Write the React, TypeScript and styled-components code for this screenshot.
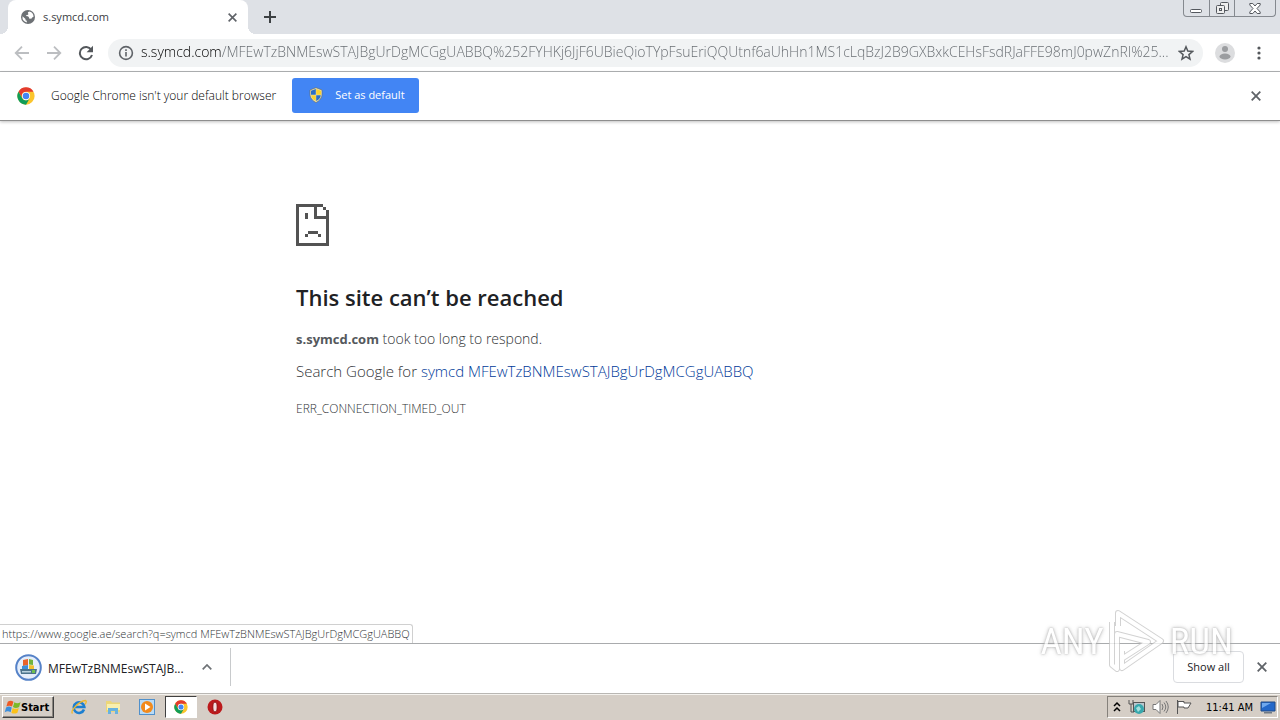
import React from "react";
import styled, { createGlobalStyle, css } from "styled-components";

const ui = `"DejaVu Sans Condensed", "DejaVu Sans", sans-serif`;
const page = `"Open Sans", "Noto Sans", sans-serif`;

const Global = createGlobalStyle`
  * { box-sizing: border-box; }
  body { margin: 0; background: #fff; }
  button { font: inherit; color: inherit; border: 0; padding: 0; background: none; }
  svg { display: block; flex: none; }
`;

const Desktop = styled.div`
  min-height: 100vh;
  display: flex;
  flex-direction: column;
  font-family: ${page};
  color: #3c4043;
`;

const TabStrip = styled.header`
  height: 34px;
  display: flex;
  align-items: stretch;
  padding-left: 8px;
  background: #dee1e6;
`;

const Tab = styled.div`
  position: relative;
  width: 240px;
  display: flex;
  align-items: center;
  gap: 8px;
  padding: 0 10px 0 13px;
  border-radius: 8px 8px 0 0;
  background: #fff;
  font-size: 11px;
  line-height: 16px;
  &::before, &::after {
    content: "";
    position: absolute;
    bottom: 0;
    width: 8px;
    height: 8px;
  }
  &::before { right: 100%; background: radial-gradient(circle at 0 0, #dee1e6 8px, #fff 8px); }
  &::after { left: 100%; background: radial-gradient(circle at 100% 0, #dee1e6 8px, #fff 8px); }
`;

const TabTitle = styled.span`
  flex: 1;
`;

const IconButton = styled.button<{ $size?: number }>`
  flex: none;
  width: ${(p) => p.$size ?? 16}px;
  height: ${(p) => p.$size ?? 16}px;
  display: grid;
  place-items: center;
`;

const NewTab = styled(IconButton)`
  align-self: center;
  margin-left: 14px;
`;

const WindowControls = styled.div`
  align-self: flex-start;
  display: flex;
  height: 17px;
  margin: 0 4px 0 auto;
  border: 1px solid #85898f;
  border-top: 0;
  border-radius: 0 0 4px 4px;
`;

const WindowButton = styled.button<{ $wide?: boolean }>`
  width: ${(p) => (p.$wide ? 41 : 25)}px;
  display: grid;
  place-items: center;
  & + & { border-left: 1px solid #85898f; }
`;

const Toolbar = styled.nav`
  height: 38px;
  display: flex;
  align-items: center;
  padding: 0 13px 0 14px;
  gap: 16px;
  background: #fff;
  border-bottom: 1px solid #b2b4b6;
`;

const AddressBar = styled.label`
  flex: 1;
  min-width: 0;
  height: 28px;
  display: flex;
  align-items: center;
  gap: 7px;
  margin: 0 -4px 0 -2px;
  padding: 0 9px 0 10px;
  border-radius: 14px;
  background: #f1f3f4;
`;

const AddressInput = styled.input`
  flex: 1;
  min-width: 0;
  height: 26px;
  padding: 0 0 2px;
  border: 0;
  outline: 0;
  font-family: ${page};
  font-size: 14px;
  font-weight: 300;
  text-overflow: ellipsis;
  color: #80868b;
  -webkit-text-fill-color: transparent;
  background: linear-gradient(to right, #000 81px, #64696e 81px);
  -webkit-background-clip: text;
  background-clip: text;
`;

const InfoBar = styled.section`
  height: 49px;
  display: flex;
  align-items: center;
  padding: 0 16px 0 17px;
  border-bottom: 1px solid #8e8e8e;
  box-shadow: 0 1px 3px #00000040;
  font-size: 12px;
  line-height: 18px;
`;

const InfoText = styled.span`
  margin: 0 16px;
  font-weight: 300;
  color: #000;
`;

const DefaultButton = styled.button`
  height: 35px;
  width: 127px;
  display: flex;
  align-items: center;
  gap: 11px;
  margin-bottom: 2px;
  padding-left: 16px;
  border-radius: 3px;
  background: #4285f4;
  color: #fff;
  font-size: 11px;
`;

const Spacer = styled.div`
  flex: 1;
`;

const Content = styled.main`
  position: relative;
  flex: 1;
  padding: 83px 24px 40px;
`;

const ErrorBox = styled.article`
  max-width: 688px;
  margin: 0 auto;
  font-weight: 300;
  color: #303336;
`;

const Heading = styled.h1`
  margin: 37px 0 17px;
  font-size: 22px;
  line-height: 28px;
  font-weight: 600;
  color: #202124;
`;

const Line = styled.p<{ $size: number }>`
  margin: 0 0 10px;
  font-size: ${(p) => p.$size}px;
  line-height: 22px;
`;

const Host = styled.strong`
  font-size: 13px;
  font-weight: 700;
  color: #54585c;
`;

const ErrorCode = styled.div`
  margin-top: 16px;
  font-size: 12px;
  line-height: 22px;
`;

const SearchLink = styled.a`
  color: #003a99;
  text-decoration: none;
`;

const StatusBubble = styled.div`
  position: absolute;
  left: 0;
  bottom: 0;
  height: 19px;
  padding: 0 2px;
  border: 1px solid #d0d0d0;
  border-width: 1px 1px 0 0;
  border-radius: 0 3px 0 0;
  background: #fff;
  font-size: 11px;
  font-weight: 300;
  line-height: 18px;
  color: #303336;
`;

const Shelf = styled.section`
  position: relative;
  height: 50px;
  display: flex;
  align-items: center;
  padding: 0 10px 3px 15px;
  border-top: 1px solid #a9abad;
  background: #fff;
`;

const Download = styled.div`
  height: 38px;
  width: 216px;
  display: flex;
  align-items: center;
  gap: 6px;
  padding-right: 15px;
  border-right: 1px solid #c8cacc;
  font-size: 12px;
  color: #202124;
`;

const FileName = styled.span`
  flex: 1;
  padding-top: 2px;
  white-space: nowrap;
`;

const ShowAll = styled.button`
  width: 71px;
  height: 32px;
  margin-right: 10px;
  border: 1px solid #dadce0;
  border-radius: 4px;
  font-size: 11px;
  line-height: 12px;
  color: #202124;
`;

const Watermark = styled.div`
  position: absolute;
  right: 47px;
  bottom: 18px;
  display: flex;
  align-items: center;
  gap: 3px;
  pointer-events: none;
  opacity: 0.75;
  font-family: "Roboto Condensed", Roboto, sans-serif;
  font-size: 37px;
  line-height: 32px;
  color: #fff;
  text-shadow: 0 0 2px #999, 0 0 4px #aaa;
`;

const Taskbar = styled.footer`
  height: 27px;
  display: flex;
  align-items: center;
  padding: 2px;
  background: #d5cec6;
  border-top: 1px solid #b9b7b3;
  box-shadow: inset 0 1px #f4f2ee;
  font-family: ${ui};
  font-size: 11px;
  color: #000;
`;

const raised = css`
  border: 1px solid;
  border-color: #fff #404040 #404040 #fff;
  box-shadow: inset -1px -1px #8b8780;
`;

const StartButton = styled.button`
  ${raised}
  width: 52px;
  height: 22px;
  display: flex;
  align-items: center;
  padding-left: 1px;
  font-size: 11px;
  font-weight: 700;
`;

const QuickLaunch = styled.div`
  display: flex;
  align-items: center;
  gap: 2px;
  margin-left: 9px;
`;

const AppButton = styled.button<{ $active?: boolean }>`
  width: 32px;
  height: 22px;
  display: grid;
  place-items: center;
  ${(p) =>
    p.$active &&
    css`
      background: #fff;
      border: 1px solid;
      border-color: #404040 #fff #fff #404040;
    `}
`;

const Tray = styled.div`
  height: 22px;
  display: flex;
  align-items: center;
  gap: 7px;
  margin-left: auto;
  padding: 0 1px 0 5px;
  border: 1px solid;
  border-color: #85817b #fff #fff #85817b;
`;

const Clock = styled.time`
  margin-left: 7px;
`;

const Cross = ({ color = "#5f6368", size = 10 }: { color?: string; size?: number }) => (
  <svg width={size} height={size} viewBox="0 0 10 10" stroke={color} strokeWidth="1.8">
    <path d="M.7.7l8.6 8.6M9.3.7L.7 9.3" />
  </svg>
);

const Arrow = ({ flip }: { flip?: boolean }) => (
  <svg width="16" height="16" viewBox="0 0 16 16" fill="none" stroke="#bcbec1" strokeWidth="1.8">
    <path d={flip ? "M1 8h13M8 1.7L14.3 8 8 14.3" : "M15 8H2M8 1.7L1.7 8 8 14.3"} />
  </svg>
);

const ChromeLogo = ({ size }: { size: number }) => (
  <svg width={size} height={size} viewBox="0 0 48 48">
    <circle cx="24" cy="24" r="23" fill="#fbc52d" />
    <path d="M4 12.5A23 23 0 0 1 44 12.5H24A11.5 11.5 0 0 0 14 29.7z" fill="#e33b2e" />
    <path d="M4 12.5A23 23 0 0 0 24 47L34 29.7A11.5 11.5 0 0 1 14 29.7z" fill="#109d58" />
    <circle cx="24" cy="24" r="11" fill="#fff" />
    <circle cx="24" cy="24" r="8.7" fill="#4285f4" />
  </svg>
);

const WinFlag = ({ size }: { size: number }) => (
  <svg width={size} height={size} viewBox="0 1 18 16">
    <path d="M4 3c2-1.500 4-1.500 6 0L8.500 8c-2-1.300-4-1.300-6 0z" fill="#ee5a24" />
    <path d="M11 3.500c2 1.200 4 1.200 6.500 0L16 8.500c-2.300 1.200-4.500 1.200-6.500 0z" fill="#7cb928" />
    <path d="M2.200 9c2-1.300 4-1.300 6 0L7 14c-2-1.300-4-1.300-6.200 0z" fill="#3b8edb" />
    <path d="M9.200 9.500c2 1.200 4 1.200 6.500 0l-1.500 5c-2.200 1.200-4.400 1.200-6.400 0z" fill="#fbc119" />
  </svg>
);

const url =
  "s.symcd.com/MFEwTzBNMEswSTAJBgUrDgMCGgUABBQ%252FYHKj6JjF6UBieQioTYpFsuEriQQUtnf6aUhHn1MS1cLqBzJ2B9GXBxkCEHsFsdRJaFFE98mJ0pwZnRI%25...";

export default function App() {
  return (
    <Desktop>
      <Global />
      <TabStrip>
        <Tab>
          <svg width="14" height="14" viewBox="0 0 14 14">
            <circle cx="7" cy="7" r="7" fill="#6d7175" />
            <path d="M8.500 1.500c-2 .4-2 1.700-1 2.400-.4 1.600-2.200.6-2.700 2.100 1.600.2 3.400.2 3.200 2.400l2.200.3c.9-.5 1-1.700 2.300-1.600a5.600 5.600 0 0 0-4-5.600zM1.500 6.300l3 2.800v1.200l1.300.5v1.700a5.700 5.700 0 0 1-4.300-6.200z" fill="#fff" />
          </svg>
          <TabTitle>s.symcd.com</TabTitle>
          <IconButton aria-label="Close tab" $size={12}><Cross size={9} /></IconButton>
        </Tab>
        <NewTab aria-label="New tab">
          <svg width="12" height="12" viewBox="0 0 12 12" stroke="#3c4043" strokeWidth="2"><path d="M6 0v12M0 6h12" /></svg>
        </NewTab>
        <WindowControls>
          <WindowButton aria-label="Minimize">
            <svg width="13" height="15" viewBox="0 0 13 15" fill="#fff" stroke="#54585e"><rect x=".5" y="8.500" width="11" height="3" rx="1" /></svg>
          </WindowButton>
          <WindowButton aria-label="Restore">
            <svg width="13" height="13" viewBox="0 0 13 13" fill="#eee" stroke="#54585e">
              <rect x="4.500" y=".5" width="8" height="8" rx="1" /><rect x=".5" y="3.500" width="8" height="8" rx="1" /><rect x="3.500" y="6.500" width="2" height="2" />
            </svg>
          </WindowButton>
          <WindowButton aria-label="Close" $wide>
            <svg width="12" height="11" viewBox="0 0 12 11" fill="#fff" stroke="#54585e"><path d="M.8.5h3L6 3 8.200.5h3v1.500L8 5.500 11.200 9v1.500h-3L6 8l-2.200 2.500h-3V9L4 5.500.8 2z" /></svg>
          </WindowButton>
        </WindowControls>
      </TabStrip>

      <Toolbar>
        <IconButton aria-label="Back"><Arrow /></IconButton>
        <IconButton aria-label="Forward"><Arrow flip /></IconButton>
        <IconButton aria-label="Reload">
          <svg width="16" height="16" viewBox="0 0 16 16"><path d="M13.200 4.600A6.200 6.200 0 1 0 14 10" fill="none" stroke="#54585c" strokeWidth="2" /><path d="M15 .8v6.400H8.600z" fill="#54585c" /></svg>
        </IconButton>
        <AddressBar>
          <svg width="16" height="16" viewBox="0 0 16 16" fill="none" stroke="#5f6368" strokeWidth="1.600"><circle cx="8" cy="8" r="6.400" /><path d="M8 7v4.500M8 4.200v1.700" /></svg>
          <AddressInput aria-label="Address" readOnly value={url} />
          <svg width="16" height="16" viewBox="0 0 16 16" fill="none" stroke="#54585c" strokeWidth="1.500"><path d="M8 1.800l1.800 4.300 4.700.4-3.600 3.100 1.100 4.600L8 11.700l-4 2.500 1.100-4.600L1.500 6.500l4.700-.4z" /></svg>
        </AddressBar>
        <IconButton aria-label="Profile" $size={20}>
          <svg width="20" height="20" viewBox="0 0 20 20"><circle cx="10" cy="10" r="10" fill="#dcdddf" /><circle cx="10" cy="6" r="3" fill="#9b9da0" /><ellipse cx="10" cy="13.500" rx="5.500" ry="3" fill="#9b9da0" /></svg>
        </IconButton>
        <IconButton aria-label="Menu">
          <svg width="4" height="14" viewBox="0 0 4 14" fill="#54585c"><circle cx="2" cy="2" r="1.600" /><circle cx="2" cy="7" r="1.600" /><circle cx="2" cy="12" r="1.600" /></svg>
        </IconButton>
      </Toolbar>

      <InfoBar>
        <ChromeLogo size={18} />
        <InfoText>Google Chrome isn't your default browser</InfoText>
        <DefaultButton>
          <svg width="16" height="16" viewBox="0 0 16 16">
            <path d="M8 .7L14 3v4c0 4-2.500 6.700-6 8.500C4.500 13.700 2 11 2 7V3z" fill="#e8e2bb" stroke="#6d6a50" strokeWidth=".6" />
            <path d="M7.800 2v5.800H3V3.800z" fill="#2c6fc4" /><path d="M8.200 2v5.800H13V3.800z" fill="#fbd22d" />
            <path d="M3.200 8.200h4.600v5.900c-2.600-1.300-4.300-3-4.600-5.900z" fill="#fbd22d" /><path d="M12.800 8.200H8.200v5.900c2.600-1.300 4.300-3 4.600-5.900z" fill="#2c6fc4" />
          </svg>
          Set as default
        </DefaultButton>
        <Spacer />
        <IconButton aria-label="Dismiss"><Cross /></IconButton>
      </InfoBar>

      <Content>
        <ErrorBox>
          <svg width="33" height="42" viewBox="0 0 33 42" shapeRendering="crispEdges" fill="#535353">
            <path d="M0 0h27v3H3v36h27V15H18V3h3v9h9V6h3v36H0zM27 3h3v3h-3zM9 9h3v6H9zM12 27h10v3H12zM9 30h3v3H9zM22 30h3v3h-3z" />
          </svg>
          <Heading>This site can’t be reached</Heading>
          <Line $size={14}><Host>s.symcd.com</Host> took too long to respond.</Line>
          <Line $size={15}>Search Google for <SearchLink href="#search">symcd MFEwTzBNMEswSTAJBgUrDgMCGgUABBQ</SearchLink></Line>
          <ErrorCode>ERR_CONNECTION_TIMED_OUT</ErrorCode>
        </ErrorBox>
        <StatusBubble>https://www.google.ae/search?q=symcd MFEwTzBNMEswSTAJBgUrDgMCGgUABBQ</StatusBubble>
      </Content>

      <Shelf>
        <Download>
          <svg width="27" height="27" viewBox="0 0 27 27">
            <circle cx="13.500" cy="13.500" r="12.300" fill="#e5eefb" stroke="#5582c8" strokeWidth="2" />
            <path d="M8 6l5-1v6l-5 1z" fill="#e8632b" /><path d="M14 5l4 1v5l-4-.5z" fill="#72b33c" /><path d="M7 12l6-1v4H7z" fill="#3a8edb" /><path d="M14 11l5 .5V15h-5z" fill="#f2c12e" />
            <path d="M5 15h17l-1 5H6z" fill="#4b738c" /><path d="M7 17h9v1.500H7z" fill="#b9d2df" /><path d="M17 16h3v3h-3z" fill="#6fc04f" />
          </svg>
          <FileName>MFEwTzBNMEswSTAJB...</FileName>
          <IconButton aria-label="Download options">
            <svg width="10" height="6" viewBox="0 0 10 6" fill="none" stroke="#6d7175" strokeWidth="1.700"><path d="M.7 5.300L5 1l4.300 4.300" /></svg>
          </IconButton>
        </Download>
        <Spacer />
        <ShowAll>Show all</ShowAll>
        <IconButton aria-label="Close downloads"><Cross /></IconButton>
        <Watermark>
          <span>ANY</span>
          <svg width="60" height="66" viewBox="0 0 60 66" fill="none" strokeLinejoin="round">
            <path d="M11 17V4L54 32 15 59V42M5 13v43l5 4V25l31 8-25 16" stroke="#c4c4c4" strokeWidth="6" />
            <path d="M11 17V4L54 32 15 59V42M5 13v43l5 4V25l31 8-25 16" stroke="#fff" strokeWidth="4" />
          </svg>
          <span>RUN</span>
        </Watermark>
      </Shelf>

      <Taskbar>
        <StartButton><WinFlag size={17} />Start</StartButton>
        <QuickLaunch>
          <AppButton aria-label="Internet Explorer">
            <svg width="16" height="16" viewBox="0 0 16 16" fill="none"><path d="M13 10.500A5.300 5.300 0 1 1 13.300 8H4" stroke="#1d7fd0" strokeWidth="2.600" /><path d="M1.500 14.500C-1 12 8 2 14.500 1.500c1.500.5.500 2.500-.5 4" stroke="#f0b92c" strokeWidth="1.300" /></svg>
          </AppButton>
          <AppButton aria-label="Explorer">
            <svg width="16" height="16" viewBox="0 0 16 16"><path d="M1 2h5l1 1.500h8V13H1z" fill="#ecd679" /><path d="M2 5h13v6H2z" fill="#f9efae" /><path d="M3 15V9h10v6h-3v-3H6v3z" fill="#68b2df" /></svg>
          </AppButton>
          <AppButton aria-label="Media Player">
            <svg width="16" height="16" viewBox="0 0 16 16"><rect x=".5" y=".5" width="15" height="15" fill="#b9dbf6" stroke="#5090cb" /><circle cx="8" cy="8" r="6" fill="#f28a1c" /><path d="M6 4.500l5.500 3.500L6 11.500z" fill="#fff" /></svg>
          </AppButton>
          <AppButton aria-label="Chrome" $active><ChromeLogo size={14} /></AppButton>
          <AppButton aria-label="Opera">
            <svg width="16" height="16" viewBox="0 0 16 16"><circle cx="8" cy="8" r="7.500" fill="#bc1a1c" /><ellipse cx="8" cy="8" rx="2.200" ry="5" fill="#f3dede" stroke="#8f0e10" /></svg>
          </AppButton>
        </QuickLaunch>
        <Tray>
          <svg width="8" height="12" viewBox="0 0 8 12" fill="none" stroke="#000" strokeWidth="1.500"><path d="M1 5l3-3 3 3M1 10l3-3 3 3" /></svg>
          <svg width="17" height="16" viewBox="0 0 17 16"><path d="M1 1v4h4V1M3 5v8h3" fill="none" stroke="#555" /><rect x="5.500" y="3.500" width="11" height="9" fill="#b9c7ce" stroke="#555" /><circle cx="11" cy="10" r="5" fill="#38a8ad" /><path d="M8 9l3-2 2 3-3 3z" fill="#a5e0dd" /></svg>
          <svg width="17" height="16" viewBox="0 0 17 16" fill="none" stroke="#777"><path d="M1 5.500h3l4-4v13l-4-4H1z" fill="#fff" /><path d="M10 5q2 3 0 6M12 3.500q3.500 4.500 0 9M14 2q4.500 6 0 12" /></svg>
          <svg width="16" height="16" viewBox="0 0 16 16" fill="#fff" stroke="#555"><path d="M1.500 1v14M2 2.500h6v1.500h7l-3 5H8V8H2z" /></svg>
          <Clock>11:41 AM</Clock>
          <svg width="16" height="16" viewBox="0 0 16 16"><path d="M1 3h14v9H1z" fill="#2468c9" stroke="#204a86" /><path d="M2 4h9L2 9z" fill="#6fa8ee" /><path d="M4 13h8v1.500H4z" fill="#707a85" /></svg>
        </Tray>
      </Taskbar>
    </Desktop>
  );
}
